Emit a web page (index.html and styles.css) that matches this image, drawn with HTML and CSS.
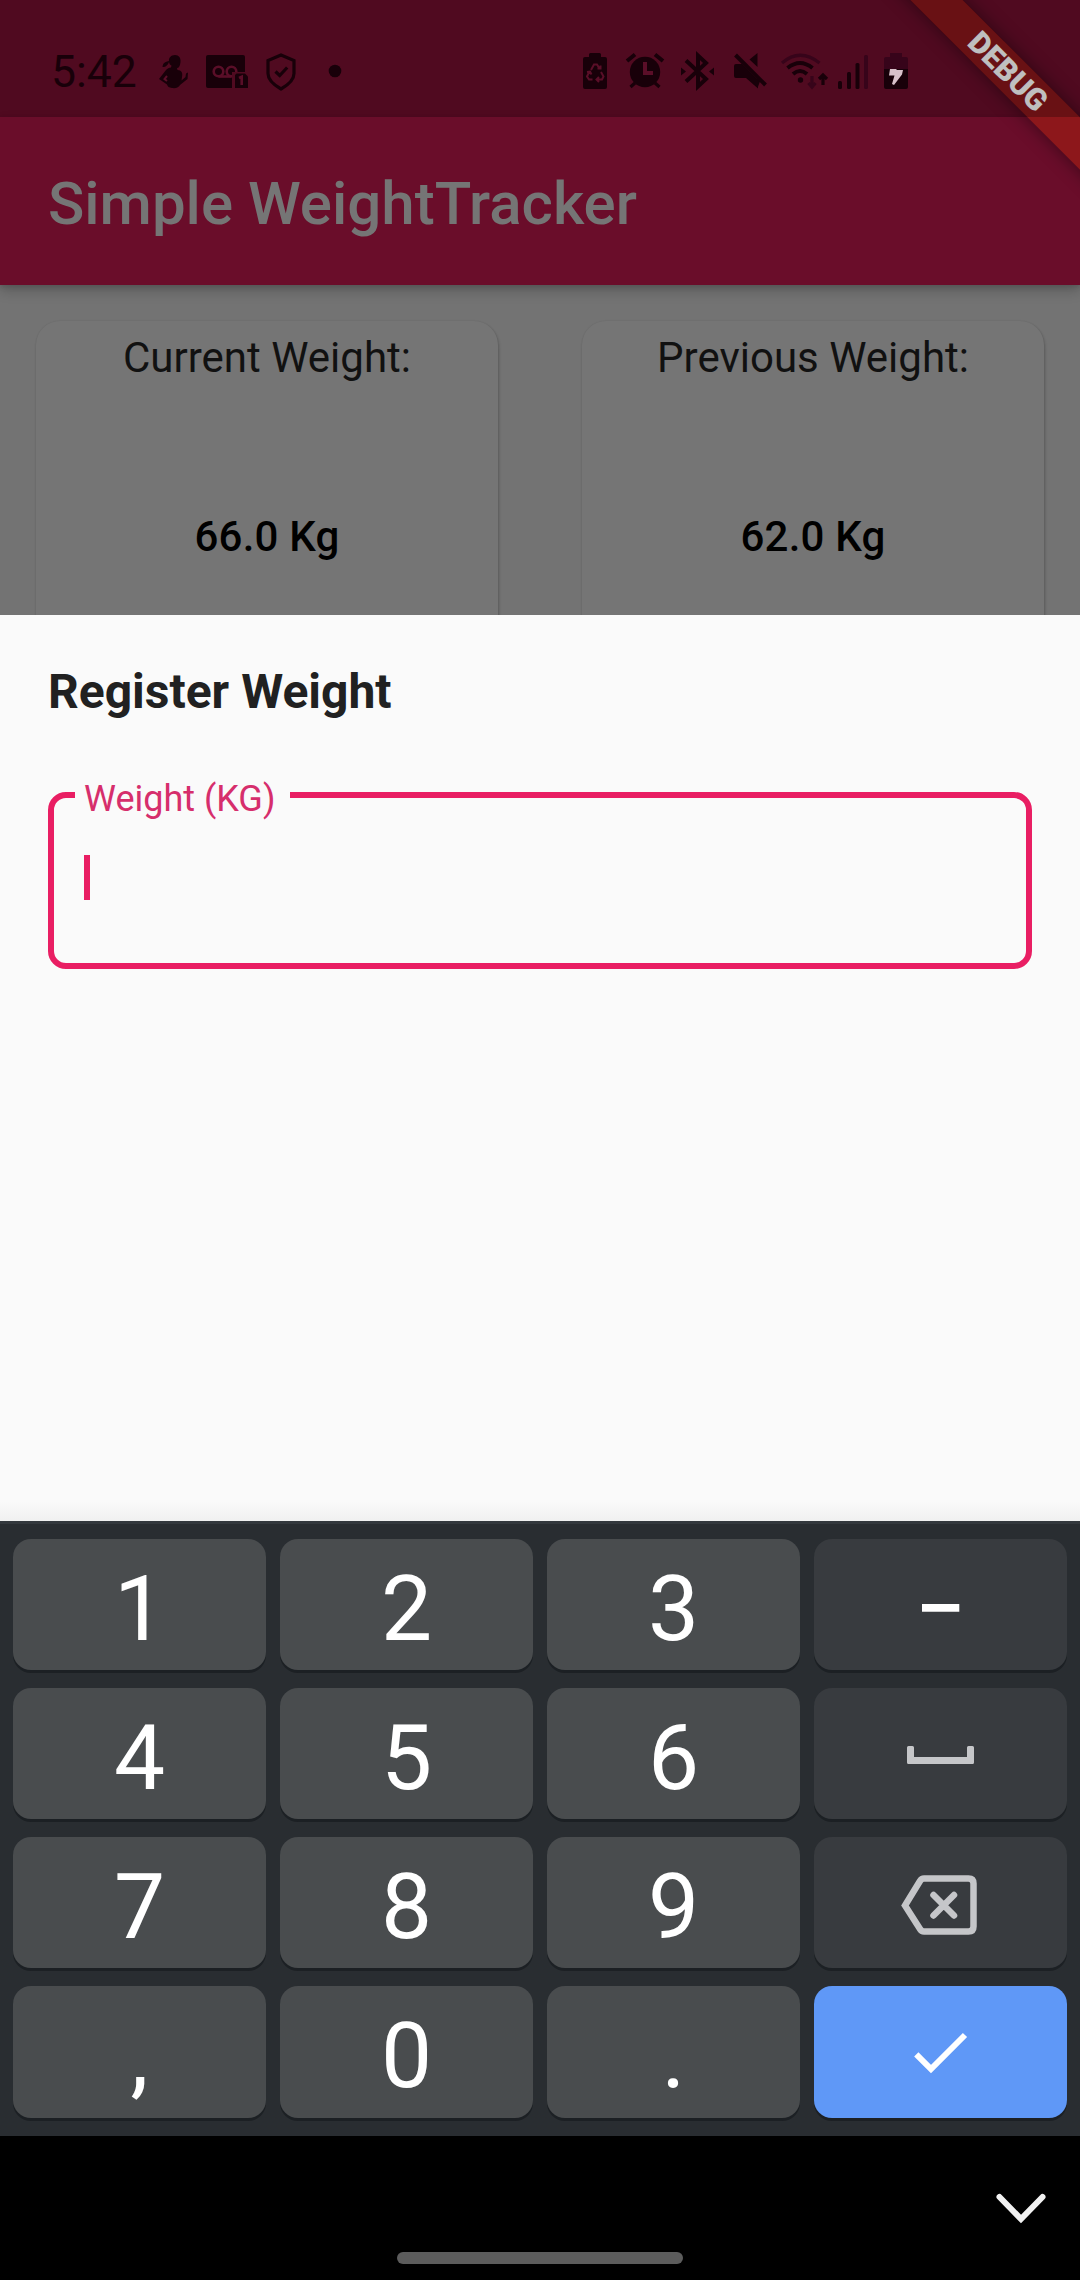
FILE: index.html
```html
<!DOCTYPE html>
<html lang="en">
<head>
<meta charset="utf-8">
<title>Simple WeightTracker</title>
<link rel="stylesheet" href="styles.css">
</head>
<body>
<div class="screen">
  <header class="status-bar">
    <div class="status-group">
      <span class="clock">5:42</span>
      <svg class="icon" width="48" height="44" viewBox="152 50 48 44">
        <path d="M175 55c4 0 6 3 5.500 7c-.5 4-1.500 6-3.500 6l.5 2c4 0 5.500 3 4.500 7l-.5 3.500l4-3.500l.5-3.500l2-1l-.5 6.500l-7.500 6c-1 2.500-4 3.500-8 3c-3-.3-4.500-1.500-5-3.500l-8-5.500l7-9c1.500-1.500 3-2.500 5-2.500l.5-2c-1.500-.5-2.300-2-2.500-3.500c-1 3-3.500 5.500-6.500 5c0-3 2-5 4.500-5.500l2-.5c-.5-3 2-6 6-6z"/>
        <path class="cut-line thin" d="M167 76l-2.500 3l2.500 2"/>
      </svg>
      <svg class="icon" width="56" height="44" viewBox="200 50 56 44">
        <path d="M208 55h35q2 0 2 2v31h-37q-2 0-2-2V57q0-2 2-2z"/>
        <g class="cut-line"><circle cx="218.500" cy="71.500" r="4.800"/><circle cx="231.500" cy="71.500" r="4.800"/><path d="M218.500 76.500h13"/></g>
        <path class="cut" d="M232 72h15v16h-15z"/>
        <path d="M236.500 73.500h8.500l3 3V88h-13V75z"/>
        <path class="cut-line" d="M239 78l2.700-1.300V85"/>
      </svg>
      <svg class="icon" width="48" height="44" viewBox="256 50 48 44">
        <path class="line" d="M281 55l-13 5.500v13c0 6.500 6 11.500 13 15.500c7-4 13-9 13-15.500v-13z"/>
        <path class="line" d="M275.500 71.500l4.200 4l7.500-8"/>
      </svg>
      <svg class="icon" width="48" height="44" viewBox="304 50 48 44"><circle cx="335" cy="71" r="6.300"/></svg>
    </div>
    <div class="status-group">
      <svg class="icon" width="46" height="44" viewBox="572 50 46 44">
        <path d="M589 57v-2.500q0-1.500 1.500-1.500h9q1.500 0 1.500 1.500V57h4q2 0 2 2v28q0 2-2 2h-20q-2 0-2-2V59q0-2 2-2z"/>
        <path class="cut-line thin" d="M591 70l3-5.500h3l2.500 4M601 72l2.500 4.500l-1.500 3h-5M592.500 79.500h-3.500l-2-3l2.500-5M597.500 68.500h3v-3M599 77l-2.500 2.500l2.500 2.500M587 72l3-.5l1.500 3"/>
      </svg>
      <svg class="icon" width="54" height="44" viewBox="618 50 54 44">
        <circle cx="645" cy="72" r="15.200"/>
        <path class="line wide" d="M627 61l8-6.500M663 61l-8-6.500"/>
        <path class="line" d="M635 83l-4.500 4M655 83l4.500 4"/>
        <path class="cut-line wide" d="M645 62v11h8"/>
      </svg>
      <svg class="icon" width="54" height="44" viewBox="672 50 54 44">
        <path class="line wide" d="M686 60.500l20 18.500l-8 7.500V55.500l8 7.500l-20 18.500"/>
        <path d="M681 67.500l5 4l-5 4zM714 67.500l-5 4l5 4z"/>
      </svg>
      <svg class="icon" width="50" height="44" viewBox="726 50 50 44">
        <path d="M736 64h6l16 16v8.500l-12-10.500h-10q-2 0-2-2V66q0-2 2-2zM757.500 53v14l-8-7.500zM757.500 77l3 3l-3 8z"/>
        <path class="line wide" d="M735.500 55l30 30"/>
      </svg>
      <svg class="icon" width="56" height="44" viewBox="776 50 56 44">
        <path class="line faint" d="M782 63q18-15.500 37.500 0"/>
        <path class="line wide" d="M787.500 68q12.500-10 25 0M793 74q7-6 14 0"/>
        <circle cx="800.500" cy="80" r="2.700"/>
        <path class="line faint" d="M812 76v11M808.500 83l3.500 4l3.500-4"/>
        <path class="line" d="M823 85V75M819 79l4-4l4 4"/>
      </svg>
      <svg class="icon" width="42" height="44" viewBox="832 50 42 44">
        <rect x="838" y="81" width="4" height="8" rx="1.500"/><rect x="847" y="72" width="4" height="17" rx="1.500"/><rect x="855.500" y="63" width="4" height="26" rx="1.500"/><rect class="pale" x="864" y="55" width="4" height="34" rx="1.500"/>
      </svg>
      <svg class="icon" width="40" height="44" viewBox="874 50 40 44">
        <path class="pale" d="M890 53h12v4h4q2 0 2 2v10h-24V59q0-2 2-2h4z"/>
        <path d="M884 69h24v18q0 2-2 2h-20q-2 0-2-2z"/>
        <path class="bolt" d="M890 69h6l1 1h6l-1 4.500l-8 10.500l-2-1l2.500-8.500h-5.500z"/>
      </svg>
    </div>
  </header>
  <div class="app-bar"><h1 class="app-title">Simple WeightTracker</h1></div>
  <div class="debug-clip"><div class="debug-banner">DEBUG</div><div class="status-tint"></div></div>
  <main class="summary">
    <section class="card"><div class="card-label">Current Weight:</div><div class="card-value">66.0 Kg</div></section>
    <section class="card"><div class="card-label">Previous Weight:</div><div class="card-value">62.0 Kg</div></section>
  </main>
  <section class="sheet">
    <h2 class="sheet-title">Register Weight</h2>
    <fieldset class="field"><legend class="field-label">Weight (KG)</legend><div class="caret"></div></fieldset>
  </section>
  <section class="keyboard">
    <div class="key">1</div><div class="key">2</div><div class="key">3</div>
    <div class="key key-fn"><svg width="120" height="90" viewBox="881 1560 120 90"><path class="white" d="M922 1604h37.300v7.700h-37.300z"/></svg></div>
    <div class="key">4</div><div class="key">5</div><div class="key">6</div>
    <div class="key key-fn"><svg width="120" height="90" viewBox="881 1709 120 90"><path class="grey" d="M908.500 1746h4q1.500 0 1.500 1.500V1757h53v-9.500q0-1.500 1.500-1.500h4q1.500 0 1.500 1.500V1762.500q0 1.500-1.500 1.500h-64q-1.500 0-1.500-1.500v-15q0-1.500 1.500-1.500z"/></svg></div>
    <div class="key">7</div><div class="key">8</div><div class="key">9</div>
    <div class="key key-fn"><svg width="120" height="90" viewBox="881 1858 120 90"><path class="grey-line" d="M924 1878.500h44.500q5 0 5 5v43q0 5-5 5H924q-2.500 0-4-2.500l-15-23.500l15-24.500q1.500-2.500 4-2.500z"/><path class="grey-line round" d="M933.500 1895l20.500 20.500M954 1895l-20.500 20.500"/></svg></div>
    <div class="key">,</div><div class="key">0</div><div class="key">.</div>
    <div class="key key-enter"><svg width="120" height="90" viewBox="881 2007 120 90"><path class="white-line" d="M916.300 2054.300l14.700 14.700l34-34"/></svg></div>
  </section>
  <footer class="nav-bar">
    <svg class="hide-keyboard" width="60" height="40" viewBox="991 2190 60 40"><path d="M999.500 2197l21.500 22l21.500-22"/></svg>
    <div class="home-pill"></div>
  </footer>
</div>
</body>
</html>
```
FILE: styles.css
```css
* { box-sizing: border-box; }
body { margin: 0; font-family: Roboto, sans-serif; }
.screen {
  position: relative;
  display: flex;
  flex-direction: column;
  width: 1080px;
  height: 2280px;
  overflow: hidden;
  background: #737373;
}

.status-bar {
  display: flex;
  justify-content: space-between;
  height: 117px;
  padding: 50px 166px 0 51px;
  background: #500a20;
}
.status-group { display: flex; }
.clock { width: 101px; font-size: 44.5px; line-height: 45px; color: #180009; white-space: nowrap; }
.icon { display: block; fill: #180009; }
.icon .line { fill: none; stroke: #180009; stroke-width: 3.2; }
.icon .cut { fill: #500a20; }
.icon .cut-line { fill: none; stroke: #5a0e28; stroke-width: 2.6; }
.icon .thin { stroke-width: 2; }
.icon .wide { stroke-width: 4; }
.icon .faint { stroke: #37041a; }
.icon .pale { fill: #37041a; }
.icon .bolt { fill: #d8c0ca; }

.app-bar {
  position: relative;
  display: flex;
  align-items: center;
  height: 168px;
  padding: 0 48px;
  background: #6a0d2a;
  box-shadow: 0 6px 12px rgba(0, 0, 0, .2), 0 2px 5px rgba(0, 0, 0, .12);
}
.app-title { margin: 6px 0 0; font-size: 60px; font-weight: 500; line-height: 70px; color: #757575; }

/* Corner ribbon laid over the status and app bars */
.debug-clip { position: absolute; top: 0; right: 0; width: 240px; height: 240px; overflow: hidden; }
.debug-banner {
  position: absolute;
  top: 53px;
  left: -12px;
  width: 360px;
  height: 37px;
  background: #8d171b;
  color: #fff;
  font-size: 30.6px;
  font-weight: 900;
  line-height: 37px;
  text-align: center;
  box-shadow: 0 0 18px rgba(0, 0, 0, .45);
  transform: rotate(45deg);
}
.status-tint {
  position: absolute;
  top: 0;
  right: 0;
  width: 240px;
  height: 117px;
  background: rgba(0, 0, 0, .25);
  clip-path: polygon(70px 0, 123px 0, 240px 117px, 187px 117px);
}

.summary { display: flex; justify-content: space-between; height: 330px; padding: 36px 36px 0; }
.card {
  width: 462px;
  height: 400px;
  border-radius: 24px;
  background: #757575;
  box-shadow: 1px 2px 3px rgba(0, 0, 0, .2), 0 0 2px rgba(0, 0, 0, .08);
  text-align: center;
  font-size: 42px;
  line-height: 50px;
}
.card-label { padding-top: 12px; color: #111; }
.card-value { padding-top: 129px; font-weight: 500; letter-spacing: .2px; color: #000; }

.sheet { position: relative; height: 906px; padding: 48px; background: linear-gradient(#fafafa 0 886px, #f0f0f0); }
.sheet-title { margin: 0; font-size: 48px; font-weight: 700; line-height: 57px; color: #212121; }
.field {
  height: 199px;
  margin: 50px 0 0;
  padding: 35px 30px 0;
  border: 6px solid #e91e63;
  border-radius: 18px;
}
.field-label { margin-left: -9px; padding: 8px 15px 0 9px; font-size: 36px; line-height: 42px; color: #d62e6c; white-space: nowrap; }
.caret { width: 6px; height: 45px; background: #e91e63; }

.keyboard {
  display: grid;
  grid-template-columns: repeat(4, 253px);
  grid-template-rows: 131px 131px 131px 132px;
  gap: 18px 14px;
  height: 615px;
  padding: 15px 13px 18px;
  border-top: 3px solid #33383d;
  background: #292d31;
}
.key {
  display: flex;
  align-items: center;
  justify-content: center;
  padding-top: 9px;
  border-radius: 18px;
  background: #494c4e;
  box-shadow: 0 3px 0 #1c2024;
  color: #fff;
  font-size: 91px;
  line-height: 107px;
}
.key-fn, .key-enter { padding-top: 0; background: #383b3f; }
.key-enter { background: #5f98f7; }
.white { fill: #fff; }
.grey { fill: #c5c6c9; }
.grey-line { fill: none; stroke: #c5c6c9; stroke-width: 6.5; }
.round { stroke-linecap: round; }
.white-line { fill: none; stroke: #fff; stroke-width: 6; }

.nav-bar {
  display: flex;
  flex-direction: column;
  align-items: center;
  height: 144px;
  padding: 54px 29px 0;
  background: #000;
}
.hide-keyboard { align-self: flex-end; fill: none; stroke: #f2f2f2; stroke-width: 6; stroke-linecap: round; }
.home-pill { width: 286px; height: 12px; margin-top: 21.5px; border-radius: 6px; background: #5c5c5c; }
```
